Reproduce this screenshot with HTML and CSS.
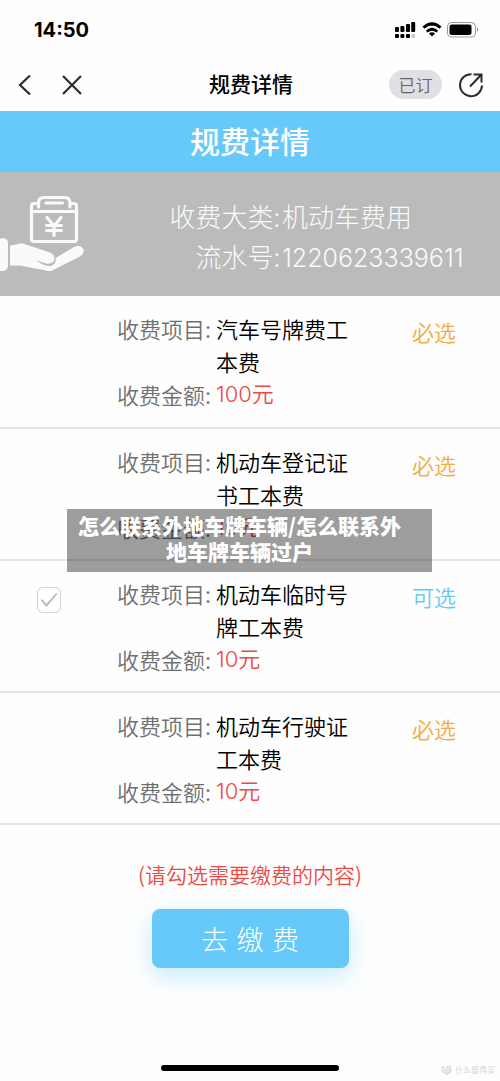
FILE: index.html
```html
<!DOCTYPE html>
<html lang="zh-CN">
<head>
<meta charset="utf-8">
<meta name="viewport" content="width=device-width, initial-scale=1">
<title>规费详情</title>
<link rel="stylesheet" href="styles.css">
</head>
<body>
<div class="page">
  <div class="status">
    <time class="clock">14:50</time>
    <svg class="status-icons" width="86" height="20" viewBox="0 0 86 20" aria-hidden="true">
      <g fill="#000">
        <rect x="1" y="7" width="4" height="5" rx="1"/><rect x="6.400" y="6" width="4" height="6" rx="1"/><rect x="12" y="4" width="4" height="8" rx="1"/><rect x="17.200" y="2" width="4" height="10" rx="1"/>
        <rect x="1" y="14" width="4" height="4" rx="1"/><rect x="6.400" y="14" width="4" height="4" rx="1"/><rect x="12" y="14" width="4" height="4" rx="1"/>
        <path d="M38 16.500l-3-3q3-2.500 6 0zM31.800 10.500l1.900 2q4.300-3.500 8.600 0l1.900-2q-6.200-5.300-12.400 0zM28.500 6.500l1.900 2.200q7.600-6.600 15.200 0l1.900-2.200q-9.500-8.600-19 0z"/>
        <rect x="55.500" y="4.500" width="22" height="10.500" rx="2.500"/>
      </g>
      <rect x="17.200" y="14" width="4" height="4" rx="1" fill="#ccc"/>
      <rect x="53.500" y="2.500" width="28" height="14.500" rx="4" fill="none" stroke="#999"/>
      <path d="M83 7.500q2.500 2.200 0 4.500z" fill="#888"/>
    </svg>
  </div>
  <header class="nav">
    <div class="nav-side">
      <button class="icon-btn" aria-label="返回"><svg width="14" height="22" viewBox="0 0 14 22"><path d="M12 1.500L2 11l10 9.500" fill="none" stroke="#2b2c33" stroke-width="2.200"/></svg></button>
      <button class="icon-btn" aria-label="关闭"><svg width="20" height="20" viewBox="0 0 20 20"><path d="M1 1l18 18M19 1L1 19" fill="none" stroke="#2b2c33" stroke-width="2.200"/></svg></button>
    </div>
    <h1 class="nav-title">规费详情</h1>
    <div class="nav-side nav-right">
      <button class="pill">已订</button>
      <button class="icon-btn" aria-label="分享"><svg width="26" height="26" viewBox="0 0 26 26"><path d="M13.500 2.200A11 11 0 1 0 24 13.500M12 14.500L23 3M15.500 2.500H23.500V10.500" fill="none" stroke="#2b2c33" stroke-width="2"/></svg></button>
    </div>
  </header>
  <main>
    <h2 class="banner">规费详情</h2>
    <section class="summary">
      <svg class="hand" width="84" height="78" viewBox="0 0 84 78" aria-hidden="true">
        <g fill="none" stroke="#fafafa" stroke-width="3.200" stroke-linecap="round" stroke-linejoin="round">
          <path d="M36 8.500H34Q31.500 8.500 31.500 11V44Q31.500 46.500 34 46.500H74Q76.500 46.500 76.500 44V11Q76.500 8.500 74 8.500H72"/>
          <path d="M32 16.500H76"/>
          <path d="M38.500 12V8Q38.500 2.500 44 2.500H64.500Q70 2.500 70 8V12"/>
          <path d="M46 8H62.500"/>
          <path d="M47 22.500L54 31L61 22.500M54 31V40.500M46.500 30.500H61.500M46.500 35.500H61.500"/>
        </g>
        <path fill="#fafafa" d="M0 43.500Q8 42 8 48V71Q8 76.500 0 76zM10 50.500L22 48.300L50 57.500Q56 60.500 54 66Q51 69.500 46 68.500L36 65.300Q44 71.500 51 71Q57 68 55.500 63L74 52Q81 49 83.800 55Q84 59 80 61.500L52 75.500Q50 76.500 46 75.500L20 70.500H10z"/>
      </svg>
      <dl class="summary-list">
        <dt>收费大类:</dt><dd>机动车费用</dd>
        <dt>流水号:</dt><dd class="serial">1220623339611</dd>
      </dl>
    </section>
    <ul class="fees">
      <li class="fee">
        <span></span>
        <dl class="fee-info"><dt>收费项目:</dt><dd>汽车号牌费工本费</dd><dt>收费金额:</dt><dd class="price">100元</dd></dl>
        <span class="tag">必选</span>
      </li>
      <li class="fee">
        <span></span>
        <dl class="fee-info"><dt>收费项目:</dt><dd>机动车登记证书工本费</dd><dt>收费金额:</dt><dd class="price">10元</dd></dl>
        <span class="tag">必选</span>
      </li>
      <li class="fee">
        <input class="check" type="checkbox" aria-label="机动车临时号牌工本费">
        <dl class="fee-info"><dt>收费项目:</dt><dd>机动车临时号牌工本费</dd><dt>收费金额:</dt><dd class="price">10元</dd></dl>
        <span class="tag optional">可选</span>
      </li>
      <li class="fee">
        <span></span>
        <dl class="fee-info"><dt>收费项目:</dt><dd>机动车行驶证工本费</dd><dt>收费金额:</dt><dd class="price">10元</dd></dl>
        <span class="tag">必选</span>
      </li>
    </ul>
    <p class="note">(请勾选需要缴费的内容)</p>
    <button class="pay">去 缴 费</button>
  </main>
  <footer class="foot">
    <div class="home-bar"></div>
    <div class="mark">
      <svg width="11" height="12" viewBox="0 0 11 12" aria-hidden="true"><path d="M2 2Q-1 6 3 9Q7 12 10 7Q11 3 8 1M2 4l2-2M3 4v5M5 3h4M7 2v2M5 5h4v4H5zM5 7h4" fill="none" stroke="#d4d4d4"/></svg>
      <span>什么值得买</span>
    </div>
  </footer>
  <div class="caption">怎么联系外地车牌车辆/怎么联系外地车牌车辆过户</div>
</div>
</body>
</html>
```
FILE: styles.css
```css
* { box-sizing: border-box; }
body, h1, h2, dl, dd, ul, p { margin: 0; padding: 0; }
body {
  background: #fefefe;
  color: #111;
  font-family: "Noto Sans CJK SC", sans-serif;
}
button { border: 0; padding: 0; background: none; font-family: inherit; }
svg { display: block; }
.page { position: relative; min-height: 100vh; display: flex; flex-direction: column; }
.status {
  display: flex;
  align-items: center;
  justify-content: space-between;
  height: 60px;
  padding: 0 20px 0 34px;
}
.clock { font: 700 20px/24px Inter, sans-serif; color: #000; }
.nav {
  display: grid;
  grid-template-columns: 1fr auto 1fr;
  align-items: center;
  height: 51px;
  padding: 0 16px 2px 18px;
}
.nav-side { display: flex; align-items: center; gap: 30px; }
.nav-right { justify-content: flex-end; gap: 16px; }
.nav-title { padding-bottom: 4px; font-size: 21px; font-weight: 500; line-height: 30px; color: #000; }
.pill {
  width: 53px;
  height: 29px;
  border-radius: 15px;
  background: #dfe0e4;
  color: #666;
  font-size: 17px;
  font-weight: 350;
  line-height: 28px;
}
.banner {
  padding-bottom: 2px;
  background: #66c9fa;
  color: #fff;
  font-size: 30px;
  font-weight: 500;
  line-height: 59px;
  text-align: center;
}
.summary {
  display: flex;
  justify-content: space-between;
  align-items: center;
  padding: 18px 35px 18px 0;
  background: #bbb;
  color: #fafafa;
}
.summary-list {
  display: grid;
  grid-template-columns: auto 183px;
  column-gap: 2px;
  padding-top: 6px;
  font-size: 26px;
  font-weight: 300;
  line-height: 40px;
}
.summary-list dt { text-align: right; }
.serial { padding-top: 2px; font-family: Inter, sans-serif; font-size: 25px; font-weight: 300; }
.fees { list-style: none; }
.fee {
  display: grid;
  grid-template-columns: 117px minmax(0, 1fr) 88px;
  padding: 16px 0 15px;
  border-bottom: 2px solid #e5e5e5;
  font-size: 22px;
  font-weight: 350;
  line-height: 33px;
}
.fee:first-child { padding-bottom: 16px; }
.fee-info {
  display: grid;
  grid-template-columns: 99px 132px;
}
.fee-info dt { color: #707070; }
.fee-info dd { color: #000; }
.fee-info .price { line-height: 32px; color: #ee4a45; font-family: Inter, "Noto Sans CJK SC", sans-serif; }
.tag { color: #f2ac42; padding-top: 3px; }
.optional { color: #66c9fa; }
.check {
  appearance: none;
  width: 24px;
  height: 26px;
  margin: 10px 0 0 37px;
  border: 1px solid #cfd2dc;
  border-radius: 6px;
  background: #fefefe;
  display: grid;
  place-items: center;
}
.check::before {
  content: "";
  width: 17px;
  height: 14px;
  background: #bbb;
  clip-path: polygon(0 52%, 10% 44%, 34% 76%, 93% 0, 100% 7%, 35% 100%);
}
.note {
  margin-top: 32px;
  color: #ee4a45;
  font-size: 21px;
  font-weight: 350;
  line-height: 34px;
  text-align: center;
}
.pay {
  display: block;
  width: 197px;
  height: 59px;
  margin: 18px auto 0;
  border-radius: 8px;
  background: #66c9fa;
  box-shadow: 0 8px 24px #c5eafb;
  color: #fff;
  font-family: "DejaVu Sans", "Noto Sans CJK SC", sans-serif;
  font-size: 27px;
  font-weight: 300;
}
.foot {
  display: grid;
  grid-template-columns: 1fr 178px 1fr;
  align-items: start;
  margin-top: auto;
  padding: 0 5px 2px;
}
.home-bar { grid-column: 2; height: 6px; margin-top: 4px; border-radius: 3px; background: #000; }
.mark {
  display: flex;
  align-items: center;
  justify-content: flex-end;
  gap: 3px;
  color: #d4d4d4;
  font-size: 8px;
  line-height: 18px;
}
.caption {
  position: absolute;
  top: 509px;
  left: 67px;
  width: 365px;
  padding: 3px 30px 8px 10px;
  background: rgba(0, 0, 0, .38);
  color: #fff;
  font-size: 21px;
  font-weight: 900;
  line-height: 26px;
  text-align: center;
}
```
